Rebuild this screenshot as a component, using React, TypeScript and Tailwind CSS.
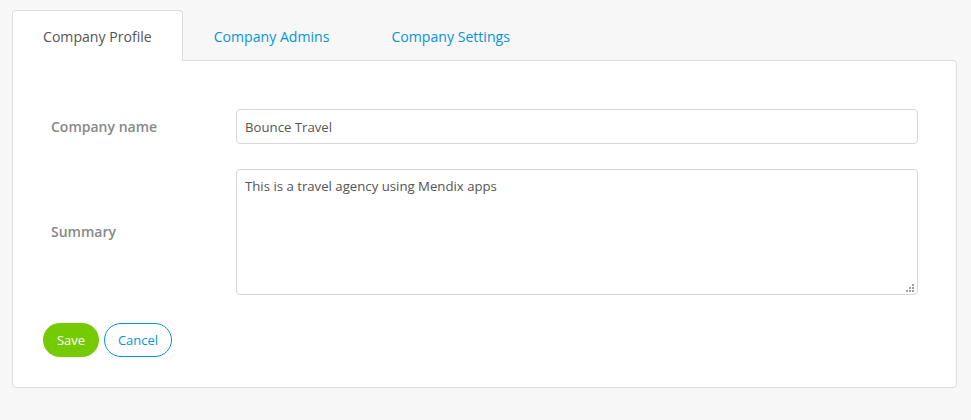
import React, { useState } from "react";

const TABS = ["Company Profile", "Company Admins", "Company Settings"];

const App = () => {
  const [active, setActive] = useState(0);
  const [name, setName] = useState("Bounce Travel");
  const [summary, setSummary] = useState("This is a travel agency using Mendix apps");

  return (
    <div className="min-h-[420px] w-full bg-[#f7f7f7] px-3 pt-[10px] font-['Open_Sans',sans-serif] text-sm">
      {/* Tabs */}
      <div className="flex">
        {TABS.map((tab, idx) => (
          <button
            key={tab}
            onClick={() => setActive(idx)}
            className={`relative -mb-px h-[51px] px-[30px] pt-[3px] text-[14.1px] ${
              idx === active
                ? "z-10 rounded-t-[4px] border border-b-0 border-[#dddddd] bg-white text-[#555555]"
                : "border border-transparent text-[#0595db]"
            }`}
          >
            {tab}
          </button>
        ))}
      </div>

      {/* Panel */}
      <div className="w-[945px] rounded-b-[4px] rounded-tr-[4px] border border-[#dddddd] bg-white px-[38px] pb-[30px] pt-[48px]">
        <div className="flex items-center">
          <label className="w-[185px] text-[14px] font-semibold text-[#888888]">
            Company name
          </label>
          <input
            value={name}
            onChange={(e) => setName(e.target.value)}
            className="h-[35px] flex-1 rounded-[4px] border border-[#d7d7d7] px-2 text-[13.2px] text-[#555555] outline-none"
          />
        </div>
        <div className="mt-[25px] flex items-center">
          <label className="w-[185px] text-[14px] font-semibold text-[#888888]">
            Summary
          </label>
          <div className="relative flex flex-1">
            <textarea
              value={summary}
              onChange={(e) => setSummary(e.target.value)}
              className="h-[126px] flex-1 resize-none rounded-[4px] border border-[#d7d7d7] px-2 py-[7px] text-[13.2px] text-[#555555] outline-none"
            />
            {/* resize grip */}
            <svg
              className="pointer-events-none absolute bottom-[3px] right-[4px]"
              width="8"
              height="8"
              viewBox="0 0 8 8"
              fill="#a0a0a0"
            >
              <rect x="6" y="0" width="2" height="2" />
              <rect x="3" y="3" width="2" height="2" />
              <rect x="6" y="3" width="2" height="2" />
              <rect x="0" y="6" width="2" height="2" />
              <rect x="3" y="6" width="2" height="2" />
              <rect x="6" y="6" width="2" height="2" />
            </svg>
          </div>
        </div>
        <div className="-ml-2 mt-7 flex gap-[5px]">
          <button className="h-[34px] w-[56px] rounded-full bg-[#76ca02] text-[13px] text-white">
            Save
          </button>
          <button className="h-[34px] w-[68px] rounded-full border border-[#0595db] bg-white text-[13px] text-[#0595db]">
            Cancel
          </button>
        </div>
      </div>
    </div>
  );
};

export default App;
